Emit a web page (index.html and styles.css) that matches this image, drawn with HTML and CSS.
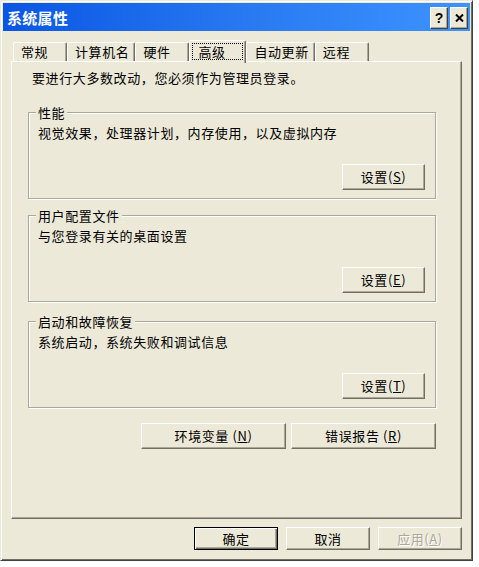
FILE: index.html
```html
<!DOCTYPE html>
<html lang="zh-CN">
<head>
<meta charset="utf-8">
<title>系统属性</title>
<link rel="stylesheet" href="styles.css">
</head>
<body>
<div class="window">
  <div class="titlebar">
    <span class="title">系统属性</span>
    <span class="cap-btn cap-help">?</span>
    <span class="cap-btn cap-close">
      <svg width="9" height="8" viewBox="0 0 9 8"><path d="M1 0.5 L8 7.5 M8 0.5 L1 7.5" stroke="#000" stroke-width="2" fill="none"/></svg>
    </span>
  </div>
  <div class="content">
    <div class="tabs">
      <div class="tab">常规</div>
      <div class="tab">计算机名</div>
      <div class="tab">硬件</div>
      <div class="tab active"><span class="focus">高级</span></div>
      <div class="tab">自动更新</div>
      <div class="tab">远程</div>
    </div>
    <div class="panel">
      <p class="intro">要进行大多数改动，您必须作为管理员登录。</p>
      <fieldset class="group">
        <legend>性能</legend>
        <p class="desc">视觉效果，处理器计划，内存使用，以及虚拟内存</p>
        <div class="group-actions"><button class="btn">设置(<u>S</u>)</button></div>
      </fieldset>
      <fieldset class="group group-2">
        <legend>用户配置文件</legend>
        <p class="desc">与您登录有关的桌面设置</p>
        <div class="group-actions"><button class="btn">设置(<u>E</u>)</button></div>
      </fieldset>
      <fieldset class="group group-3">
        <legend>启动和故障恢复</legend>
        <p class="desc">系统启动，系统失败和调试信息</p>
        <div class="group-actions"><button class="btn">设置(<u>T</u>)</button></div>
      </fieldset>
      <div class="sys-actions">
        <button class="btn btn-wide">环境变量 (<u>N</u>)</button>
        <button class="btn btn-wide">错误报告 (<u>R</u>)</button>
      </div>
    </div>
    <div class="footer">
      <button class="btn btn-dlg btn-default">确定</button>
      <button class="btn btn-dlg">取消</button>
      <button class="btn btn-dlg btn-disabled">应用(<u>A</u>)</button>
    </div>
  </div>
</div>
</body>
</html>
```
FILE: styles.css
```css
body {
  margin: 0;
  background: #fff;
  font-family: "Noto Sans CJK SC", "Liberation Sans", sans-serif;
  font-size: 13px;
  letter-spacing: 0.6px;
  color: #000;
}

.window {
  width: 467px;
  height: 555px;
  border: 1px solid;
  border-color: #ECE9D8 #404040 #404040 #ECE9D8;
  padding: 2px;
  box-shadow: inset 1px 1px #fff, inset -1px -1px #716f64;
  background: #ECE9D8;
  display: flex;
  flex-direction: column;
}

.titlebar {
  height: 28px;
  flex: none;
  background: linear-gradient(to right, #0a56e4, #2a7bf2 55%, #3d93ff);
  display: flex;
  align-items: flex-start;
  padding: 0 2px 0 4px;
  color: #fff;
}

.title {
  flex: 1;
  font-weight: bold;
  font-size: 15px;
  letter-spacing: 0.3px;
  line-height: 28px;
  padding-top: 1px;
}

.cap-btn {
  width: 18px;
  height: 22px;
  margin-top: 4px;
  box-sizing: border-box;
  background: #ECE9D8;
  border: 1px solid;
  border-color: #fff #404040 #404040 #fff;
  box-shadow: inset -1px -1px #aca899;
  display: flex;
  align-items: center;
  justify-content: center;
  color: #000;
}

.cap-help {
  font-family: "Liberation Sans", sans-serif;
  font-weight: bold;
  font-size: 14px;
  letter-spacing: 0;
}

.cap-close {
  margin-left: 2px;
}

.content {
  flex: 1;
  padding: 9px 8px 8px 8px;
  display: flex;
  flex-direction: column;
}

.tabs {
  display: flex;
  height: 21px;
  align-items: flex-end;
  padding-left: 2px;
}

.tab {
  height: 19px;
  box-sizing: border-box;
  min-width: 54px;
  padding: 0 5px 0 7px;
  border: 1px solid;
  border-bottom: none;
  border-color: #fff #716f64 transparent #fff;
  box-shadow: inset -1px 0 #aca899;
  border-radius: 2px 2px 0 0;
  line-height: 18px;
  white-space: nowrap;
  background: #ECE9D8;
}

.tab.active {
  height: 23px;
  margin-bottom: -2px;
  min-width: 57px;
  padding: 2px 2px 0 2px;
  position: relative;
  z-index: 1;
}

.focus {
  display: block;
  height: 17px;
  box-sizing: border-box;
  border: 1px dotted #000;
  line-height: 15px;
  padding-left: 5px;
}

.panel {
  height: 458px;
  box-sizing: border-box;
  border: 1px solid;
  border-color: #fff #716f64 #716f64 #fff;
  box-shadow: inset -1px -1px #aca899;
  padding: 8px 25px 0 16px;
}

.intro {
  margin: 0;
  padding-left: 4px;
  line-height: 16px;
}

.group {
  margin: 19px 0 0;
  padding: 5px 10px 8px 7px;
  border: 1px solid #aca899;
  box-shadow: inset 1px 1px #fff, 1px 1px #fff;
  min-width: 0;
}

.group-2 {
  margin-top: 9px;
}

.group-3 {
  margin-top: 12px;
}

.group legend {
  padding: 0 2px;
  line-height: 15px;
  background: #ECE9D8;
}

.desc {
  margin: 0 0 0 2px;
  line-height: 16px;
}

.group-actions {
  display: flex;
  justify-content: flex-end;
  margin-top: 23px;
}

.btn {
  width: 83px;
  height: 26px;
  box-sizing: border-box;
  border: 1px solid;
  border-color: #fff #716f64 #716f64 #fff;
  box-shadow: inset -1px -1px #aca899;
  background: #ECE9D8;
  font: inherit;
  letter-spacing: inherit;
  color: #000;
  padding: 0;
  line-height: 16px;
}

.btn u {
  text-underline-offset: 1px;
}

.sys-actions {
  display: flex;
  justify-content: flex-end;
  gap: 5px;
  margin-top: 15px;
}

.btn-wide {
  width: 145px;
}

.footer {
  display: flex;
  justify-content: flex-end;
  gap: 8px;
  margin-top: 8px;
}

.btn-dlg {
  width: 84px;
  height: 23px;
}

.btn-default {
  border-color: #000;
  box-shadow: inset 1px 1px #fff, inset -1px -1px #716f64, inset -2px -2px #aca899;
}

.btn-disabled {
  color: #aca899;
  text-shadow: 1px 1px #fff;
}
```
